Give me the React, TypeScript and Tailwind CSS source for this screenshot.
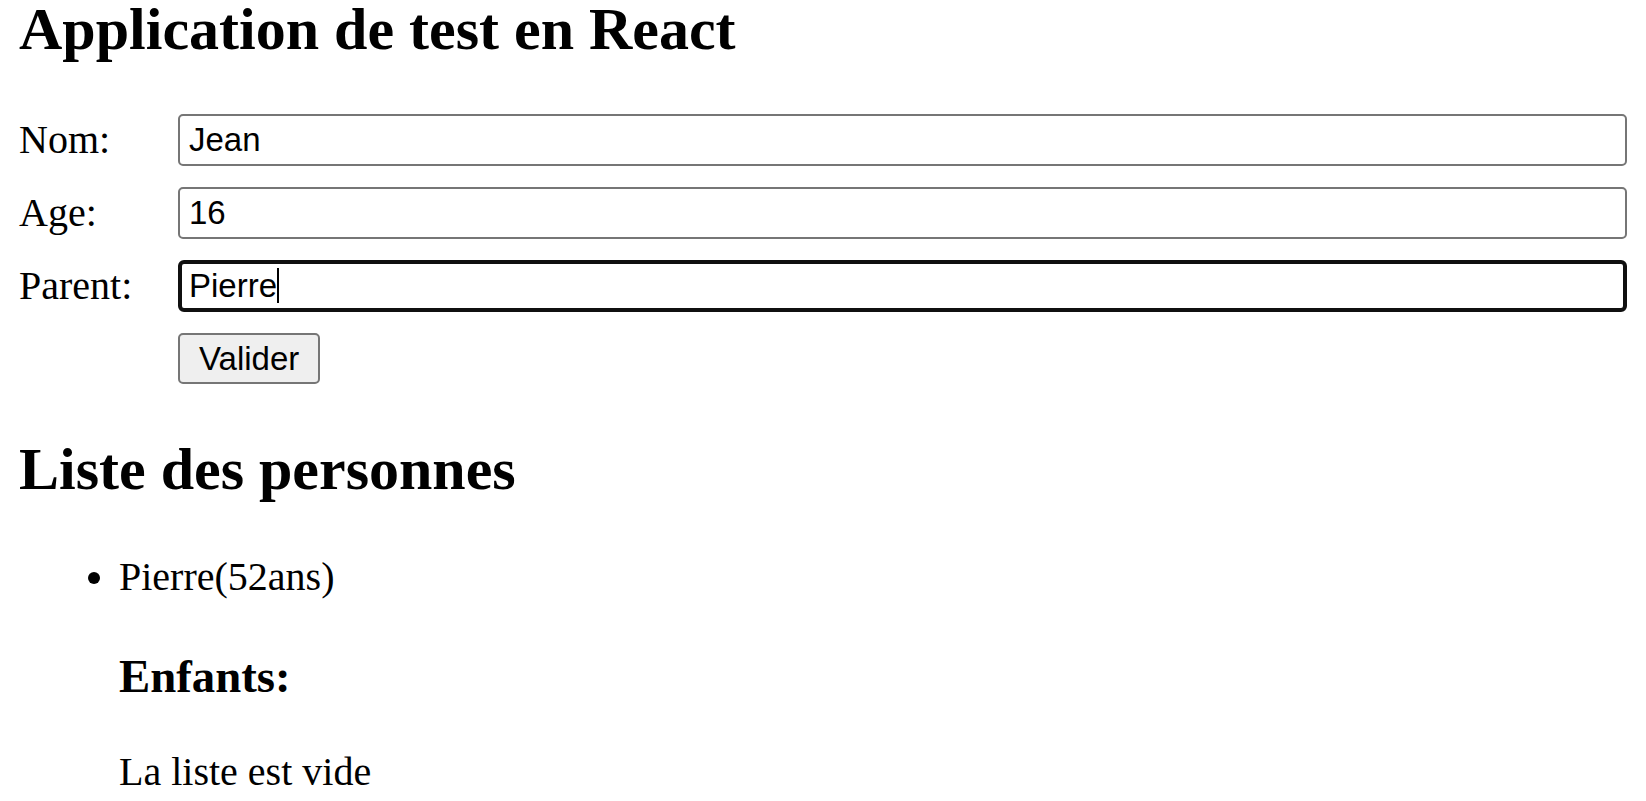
import React from "react";

const fields = [
  { label: "Nom:", value: "Jean" },
  { label: "Age:", value: "16" },
];

export default function App() {
  return (
    <div className="min-h-screen bg-white px-[19px] text-black font-['Liberation_Serif','Times_New_Roman',serif] text-[40px] leading-[46px]">
      <h1 className="text-[60px] font-bold leading-[58px]">
        Application de test en React
      </h1>

      {/* Form */}
      <div className="mt-[56px] flex flex-col gap-[21px]">
        {fields.map((field) => (
          <div key={field.label} className="flex items-center h-[52px]">
            <label className="w-[159px] shrink-0">{field.label}</label>
            <input
              readOnly
              value={field.value}
              className="flex-1 h-[52px] min-w-0 border-2 border-[#767676] rounded-[5px] bg-white px-[9px] text-[33px] text-black font-['Liberation_Sans',Arial,sans-serif] outline-none"
            />
          </div>
        ))}
        <div className="flex items-center h-[52px]">
          <label className="w-[159px] shrink-0">Parent:</label>
          <div className="relative flex-1 min-w-0">
            <input
              readOnly
              value="Pierre"
              className="w-full h-[52px] border-[4px] border-[#101010] rounded-[6px] bg-white px-[7px] text-[33px] text-black font-['Liberation_Sans',Arial,sans-serif] outline-none"
            />
            {/* text caret */}
            <span className="absolute left-[99px] top-[8px] h-[35px] w-[2px] bg-black" />
          </div>
        </div>
        <div className="flex h-[51px]">
          <div className="w-[159px] shrink-0" />
          <button className="h-[51px] border-2 border-[#767676] rounded-[5px] bg-[#efefef] px-[19px] text-[33px] text-black font-['Liberation_Sans',Arial,sans-serif]">
            Valider
          </button>
        </div>
      </div>

      {/* Liste */}
      <h2 className="mt-[56px] text-[60px] font-bold leading-[58px]">
        Liste des personnes
      </h2>
      <ul className="mt-[56px] list-disc pl-[100px]">
        <li>
          Pierre(52ans)
          <h3 className="mt-[50px] text-[46.8px] font-bold leading-[52px]">
            Enfants:
          </h3>
          <p className="mt-[47px]">La liste est vide</p>
        </li>
      </ul>
    </div>
  );
}
